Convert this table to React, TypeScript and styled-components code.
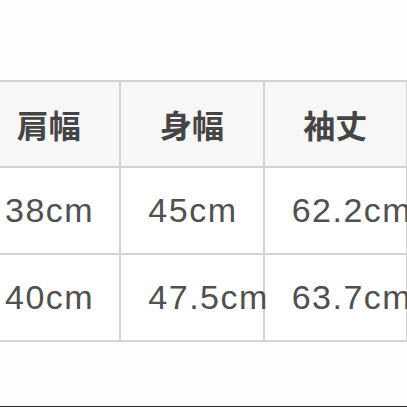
import React from 'react';
import styled, { createGlobalStyle } from 'styled-components';

const GlobalStyle = createGlobalStyle`
    html, body {
        margin: 0;
        padding: 0;
        background: #fefefe;
    }
`

const BORDER = '2px solid #d4d4d4';

const Page = styled.div`
    width: 407px;
    height: 407px;
    box-sizing: border-box;
    padding-top: 80px;
    overflow: hidden;
    border-bottom: 1px solid #2c2c2c;
`

// the first column starts off-screen, as in the cropped shot
const SizeTable = styled.table`
    width: 432px;
    margin-left: -24px;
    border-collapse: collapse;
    table-layout: fixed;
    border: ${BORDER};
`

const HeadCell = styled.th`
    height: 84px;
    padding: 0;
    border: ${BORDER};
    background: #f7f7f7;
    color: #454545;
    font-family: "Noto Sans CJK JP", "Noto Sans", sans-serif;
    font-size: 32px;
    font-weight: 700;
    text-align: center;
    vertical-align: middle;
`

const DataCell = styled.td`
    height: 85px;
    padding: 0 0 0 27px;
    border: ${BORDER};
    background: #ffffff;
    color: #505050;
    font-family: "Liberation Sans", Arial, sans-serif;
    font-size: 34px;
    letter-spacing: 1.5px;
    white-space: nowrap;
    overflow: visible;
    vertical-align: middle;
`

const headers = ['肩幅', '身幅', '袖丈'];

const rows = [
    ['38cm', '45cm', '62.2cm'],
    ['40cm', '47.5cm', '63.7cm'],
];

export default function App() {
    return (
        <>
            <GlobalStyle />
            <Page>
                <SizeTable>
                    <colgroup>
                        <col />
                        <col />
                        <col />
                    </colgroup>
                    <thead>
                        <tr>
                            {headers.map(h => <HeadCell key={h}>{h}</HeadCell>)}
                        </tr>
                    </thead>
                    <tbody>
                        {rows.map((row, i) => (
                            <tr key={i}>
                                {row.map((value, j) => <DataCell key={j}>{value}</DataCell>)}
                            </tr>
                        ))}
                    </tbody>
                </SizeTable>
            </Page>
        </>
    );
}
